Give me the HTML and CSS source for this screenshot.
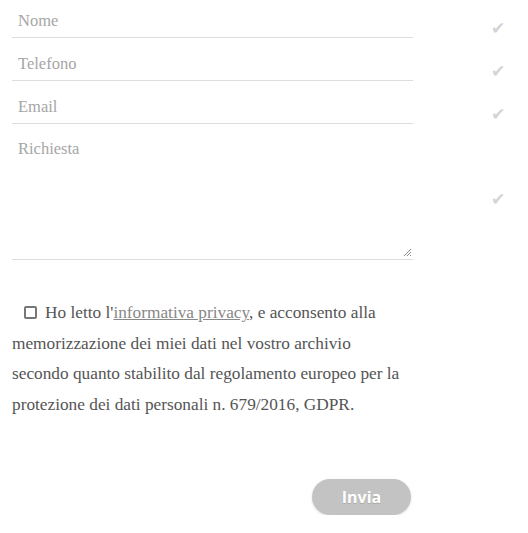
FILE: index.html
```html
<!DOCTYPE html>
<html lang="it">
<head>
<meta charset="utf-8">
<title>Contatti</title>
<link rel="stylesheet" href="styles.css">
</head>
<body>
<form class="form">
  <div class="row">
    <div class="field"><span class="ph">Nome</span></div>
    <span class="check">✔</span>
  </div>
  <div class="row">
    <div class="field"><span class="ph">Telefono</span></div>
    <span class="check">✔</span>
  </div>
  <div class="row">
    <div class="field"><span class="ph">Email</span></div>
    <span class="check">✔</span>
  </div>
  <div class="row">
    <div class="field area"><span class="ph">Richiesta</span>
      <svg class="grip" width="9" height="9" viewBox="0 0 9 9"><path d="M8 1L1 8M8 4L4 8M8 7L7 8" stroke="#888" stroke-width="1"/></svg>
    </div>
    <span class="check check-area">✔</span>
  </div>
  <p class="consent"><span class="box"></span>Ho letto l'<a class="link" href="#">informativa privacy</a>, e acconsento alla memorizzazione dei miei dati nel vostro archivio<br>secondo quanto stabilito dal regolamento europeo per la protezione dei dati personali n. 679/2016, GDPR.</p>
  <div class="actions">
    <span class="btn">Invia</span>
  </div>
</form>
</body>
</html>
```
FILE: styles.css
```css
html, body { margin: 0; padding: 0; background: #fff; }
body { font-family: "Liberation Serif", "DejaVu Serif", serif; }
.form { padding: 0 0 0 12px; width: 516px; box-sizing: border-box; }
.row { display: flex; align-items: center; margin-bottom: 5px; }
.field {
  flex: 0 0 401px; width: 401px; height: 37px; border-bottom: 1px solid #ddd;
  box-sizing: border-box; display: flex; align-items: center;
  padding: 5px 0 0 6px;
}
.ph { color: #a6a6a6; font-size: 16.5px; }
.area { height: 131px; align-items: flex-start; padding-top: 10px; position: relative; }
.grip { position: absolute; right: 1px; bottom: 2px; }
.check { color: #d4d4d4; font-size: 17px; margin-left: 78px; padding-top: 18px; font-family: "DejaVu Sans", sans-serif; }
.check-area { padding-top: 9px; }
.consent {
  margin: 38px 0 0 0; width: 401px; font-size: 17.3px; line-height: 30.6px; color: #555;
}
.box {
  display: inline-block; width: 9px; height: 9px; border: 2px solid #777; border-radius: 2px;
  margin: 0 8px 0 12px; vertical-align: -1px;
}
.link { color: #888; text-decoration: underline; }
.actions { display: flex; justify-content: flex-end; width: 399px; margin-top: 59px; }
.btn {
  display: inline-block; width: 99px; height: 36px; line-height: 36px; text-align: center;
  background: #c3c3c3; color: #fff; border-radius: 18px; font-family: "Open Sans", sans-serif;
  font-weight: 700; font-size: 16px; box-shadow: 0 1px 3px rgba(0,0,0,0.12);
  text-shadow: 0 1px 1px rgba(0,0,0,0.15);
}
```
